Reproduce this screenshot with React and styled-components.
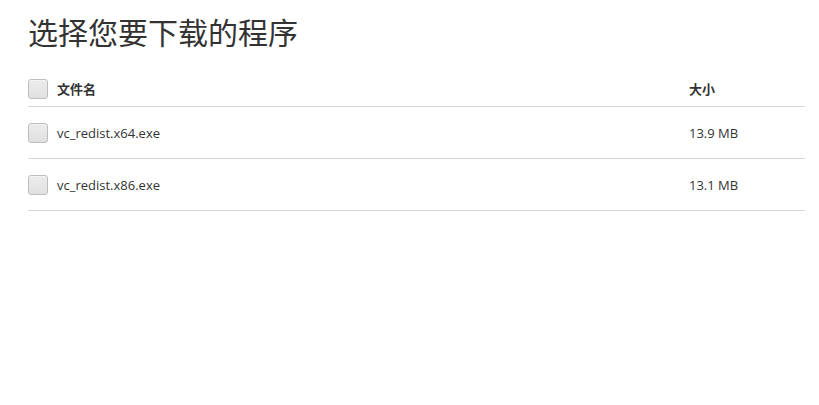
import React from 'react'
import styled, { createGlobalStyle } from 'styled-components'

const files = [
  { name: 'vc_redist.x64.exe', size: '13.9 MB' },
  { name: 'vc_redist.x86.exe', size: '13.1 MB' },
]

const GlobalStyle = createGlobalStyle`
  body {
    margin: 0;
    background: #fff;
    font-family: "Open Sans", "Noto Sans CJK SC", sans-serif;
    color: #333;
  }
`

const Page = styled.div`
  padding: 0 14px 0 28px;
`

const Title = styled.h1`
  margin: 0;
  padding-top: 13px;
  font-family: "Noto Sans CJK SC", sans-serif;
  font-size: 30px;
  font-weight: 400;
  line-height: 36px;
  color: #333;
`

const Table = styled.div`
  margin-top: 22px;
`

const Row = styled.div`
  display: grid;
  grid-template-columns: 20px 1fr 116px;
  column-gap: 9px;
  align-items: center;
  height: ${p => (p.$head ? '35px' : '51px')};
  border-bottom: 1px solid #d6d6d6;
  font-size: 13px;
  font-weight: ${p => (p.$head ? 700 : 400)};
  font-family: ${p => (p.$head ? '"Noto Sans CJK SC", sans-serif' : '"Open Sans", "Noto Sans CJK SC", sans-serif')};
  color: #333;
`

const Box = styled.span`
  width: 18px;
  height: 18px;
  border: 1px solid #bdbdbd;
  border-radius: 3px;
  background: linear-gradient(#ececec, #e0e0e0);
  box-shadow: inset 0 1px 0 #f4f4f4;
`

const Size = styled.span`
  padding-left: 0;
`

export default function App() {
  return (
    <>
      <GlobalStyle />
      <Page>
        <Title>选择您要下载的程序</Title>
        <Table>
          <Row $head>
            <Box />
            <span>文件名</span>
            <Size>大小</Size>
          </Row>
          {files.map(f => (
            <Row key={f.name}>
              <Box />
              <span>{f.name}</span>
              <Size>{f.size}</Size>
            </Row>
          ))}
        </Table>
      </Page>
    </>
  )
}
